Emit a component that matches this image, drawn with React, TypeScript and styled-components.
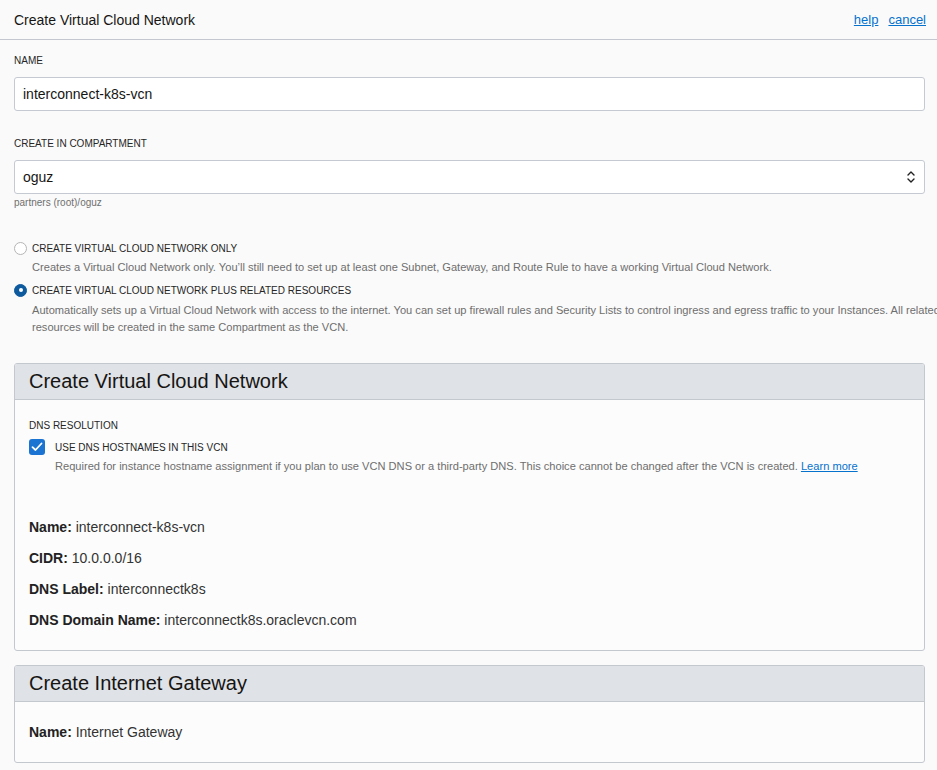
import React from "react";
import styled, { createGlobalStyle } from "styled-components";

const Global = createGlobalStyle`
  html, body { margin: 0; padding: 0; background: #fafafa; overflow: hidden; }
  body { font-family: "Liberation Sans", Arial, sans-serif; color: #333; }
`;

const Page = styled.div`
  width: 937px;
  min-height: 770px;
  background: #fafafa;
`;

const TopBar = styled.header`
  height: 39px;
  border-bottom: 1px solid #c4c6d0;
  display: flex;
  align-items: center;
  justify-content: space-between;
  padding: 0 11px 0 14px;
`;

const TopTitle = styled.h1`
  margin: 0;
  font-size: 14px;
  font-weight: normal;
  color: #161513;
`;

const Links = styled.nav`
  display: flex;
  gap: 10px;
`;

const Link = styled.a`
  color: #0572ce;
  text-decoration: underline;
  font-size: 13px;
  cursor: pointer;
`;

const Content = styled.main`
  padding: 15px 12px 0 14px;
  display: flex;
  flex-direction: column;
`;

const FieldLabel = styled.label`
  display: block;
  font-size: 10px;
  line-height: 12px;
  color: #262626;
  text-transform: uppercase;
  margin-bottom: 10px;
`;

const Field = styled.div<{ $mb?: number }>`
  margin-bottom: ${(p) => p.$mb ?? 0}px;
`;

const InputBox = styled.div`
  height: 32px;
  border: 1px solid #c4c9d2;
  border-radius: 3px;
  background: #fff;
  display: flex;
  align-items: center;
  justify-content: space-between;
  padding: 0 8px;
  font-size: 14px;
  color: #161513;
`;

const Hint = styled.div`
  font-size: 10px;
  line-height: 12px;
  color: #6f6f6f;
  margin-top: 3px;
`;

const RadioGroup = styled.div`
  margin-top: 32px;
  display: flex;
  flex-direction: column;
`;

const RadioRow = styled.div`
  display: flex;
  align-items: center;
  gap: 5px;
  height: 14px;
`;

const RadioDot = styled.span<{ $checked?: boolean }>`
  width: 13px;
  height: 13px;
  box-sizing: border-box;
  border-radius: 50%;
  border: 1px solid ${(p) => (p.$checked ? "#0d5a9e" : "#b5b5b5")};
  background: ${(p) => (p.$checked ? "#0d5a9e" : "#fff")};
  display: flex;
  align-items: center;
  justify-content: center;
  &::after {
    content: "";
    display: ${(p) => (p.$checked ? "block" : "none")};
    width: 4px;
    height: 4px;
    border-radius: 50%;
    background: #fff;
  }
`;

const OptionLabel = styled.span`
  font-size: 10px;
  color: #262626;
  text-transform: uppercase;
`;

const Desc = styled.p<{ $mt?: number; $mb?: number; $indent?: number }>`
  margin: ${(p) => p.$mt ?? 4}px 0 ${(p) => p.$mb ?? 0}px ${(p) => p.$indent ?? 18}px;
  font-size: 11.1px;
  line-height: 17px;
  color: #6e6e6e;
  white-space: nowrap;
`;

const Panel = styled.section<{ $mt?: number }>`
  margin-top: ${(p) => p.$mt ?? 0}px;
  border: 1px solid #c3c8ce;
  border-radius: 3px;
  background: #fcfcfc;
  overflow: hidden;
`;

const PanelHeader = styled.div`
  height: 35px;
  background: #dfe2e6;
  border-bottom: 1px solid #c3c8ce;
  display: flex;
  align-items: center;
  padding: 0 14px;
`;

const PanelTitle = styled.h2`
  margin: 0;
  font-size: 20px;
  font-weight: normal;
  color: #161513;
`;

const PanelBody = styled.div`
  padding: 20px 14px 20px 14px;
`;

const SubLabel = styled.div`
  font-size: 10px;
  line-height: 12px;
  color: #262626;
  text-transform: uppercase;
  margin-bottom: 7px;
`;

const CheckRow = styled.div`
  display: flex;
  align-items: center;
  gap: 10px;
`;

const CheckBox = styled.span`
  width: 16px;
  height: 16px;
  border-radius: 3px;
  background: #1b74d1;
  display: flex;
  align-items: center;
  justify-content: center;
`;

const InlineLink = styled.a`
  color: #0572ce;
  text-decoration: underline;
  cursor: pointer;
`;

const Summary = styled.div<{ $mt?: number }>`
  margin-top: ${(p) => p.$mt ?? 0}px;
  display: flex;
  flex-direction: column;
  gap: 11px;
`;

const SummaryRow = styled.div`
  font-size: 14px;
  line-height: 20px;
  color: #333;
  b {
    color: #222;
  }
`;

const Chevrons = () => (
  <svg width="10" height="14" viewBox="0 0 10 14" fill="none" stroke="#222" strokeWidth="1.4" strokeLinecap="round" strokeLinejoin="round">
    <path d="M2 5 L5 2 L8 5" />
    <path d="M2 9 L5 12 L8 9" />
  </svg>
);

const Check = () => (
  <svg width="12" height="10" viewBox="0 0 12 10" fill="none" stroke="#fff" strokeWidth="1.8" strokeLinecap="round" strokeLinejoin="round">
    <path d="M1.5 5.2 L4.5 8 L10.5 1.5" />
  </svg>
);

export default function App() {
  return (
    <Page>
      <Global />
      <TopBar>
        <TopTitle>Create Virtual Cloud Network</TopTitle>
        <Links>
          <Link>help</Link>
          <Link>cancel</Link>
        </Links>
      </TopBar>
      <Content>
        <Field $mb={27}>
          <FieldLabel>Name</FieldLabel>
          <InputBox>interconnect-k8s-vcn</InputBox>
        </Field>
        <Field>
          <FieldLabel>Create in Compartment</FieldLabel>
          <InputBox>
            <span>oguz</span>
            <Chevrons />
          </InputBox>
          <Hint>partners (root)/oguz</Hint>
        </Field>
        <RadioGroup>
          <RadioRow>
            <RadioDot />
            <OptionLabel>Create Virtual Cloud Network Only</OptionLabel>
          </RadioRow>
          <Desc $mb={7}>
            Creates a Virtual Cloud Network only. You’ll still need to set up at least one Subnet, Gateway, and Route Rule to have a working Virtual Cloud Network.
          </Desc>
          <RadioRow>
            <RadioDot $checked />
            <OptionLabel>Create Virtual Cloud Network Plus Related Resources</OptionLabel>
          </RadioRow>
          <Desc $mt={5}>
            Automatically sets up a Virtual Cloud Network with access to the internet. You can set up firewall rules and Security Lists to control ingress and egress traffic to your Instances. All related
            <br />
            resources will be created in the same Compartment as the VCN.
          </Desc>
        </RadioGroup>
        <Panel $mt={27}>
          <PanelHeader>
            <PanelTitle>Create Virtual Cloud Network</PanelTitle>
          </PanelHeader>
          <PanelBody>
            <SubLabel>DNS Resolution</SubLabel>
            <CheckRow>
              <CheckBox>
                <Check />
              </CheckBox>
              <OptionLabel>Use DNS Hostnames in this VCN</OptionLabel>
            </CheckRow>
            <Desc $mt={3} $indent={26}>
              Required for instance hostname assignment if you plan to use VCN DNS or a third-party DNS. This choice cannot be changed after the VCN is created.{" "}
              <InlineLink>Learn more</InlineLink>
            </Desc>
            <Summary $mt={42}>
              <SummaryRow>
                <b>Name:</b> interconnect-k8s-vcn
              </SummaryRow>
              <SummaryRow>
                <b>CIDR:</b> 10.0.0.0/16
              </SummaryRow>
              <SummaryRow>
                <b>DNS Label:</b> interconnectk8s
              </SummaryRow>
              <SummaryRow>
                <b>DNS Domain Name:</b> interconnectk8s.oraclevcn.com
              </SummaryRow>
            </Summary>
          </PanelBody>
        </Panel>
        <Panel $mt={14}>
          <PanelHeader>
            <PanelTitle>Create Internet Gateway</PanelTitle>
          </PanelHeader>
          <PanelBody>
            <SummaryRow>
              <b>Name:</b> Internet Gateway
            </SummaryRow>
          </PanelBody>
        </Panel>
      </Content>
    </Page>
  );
}
